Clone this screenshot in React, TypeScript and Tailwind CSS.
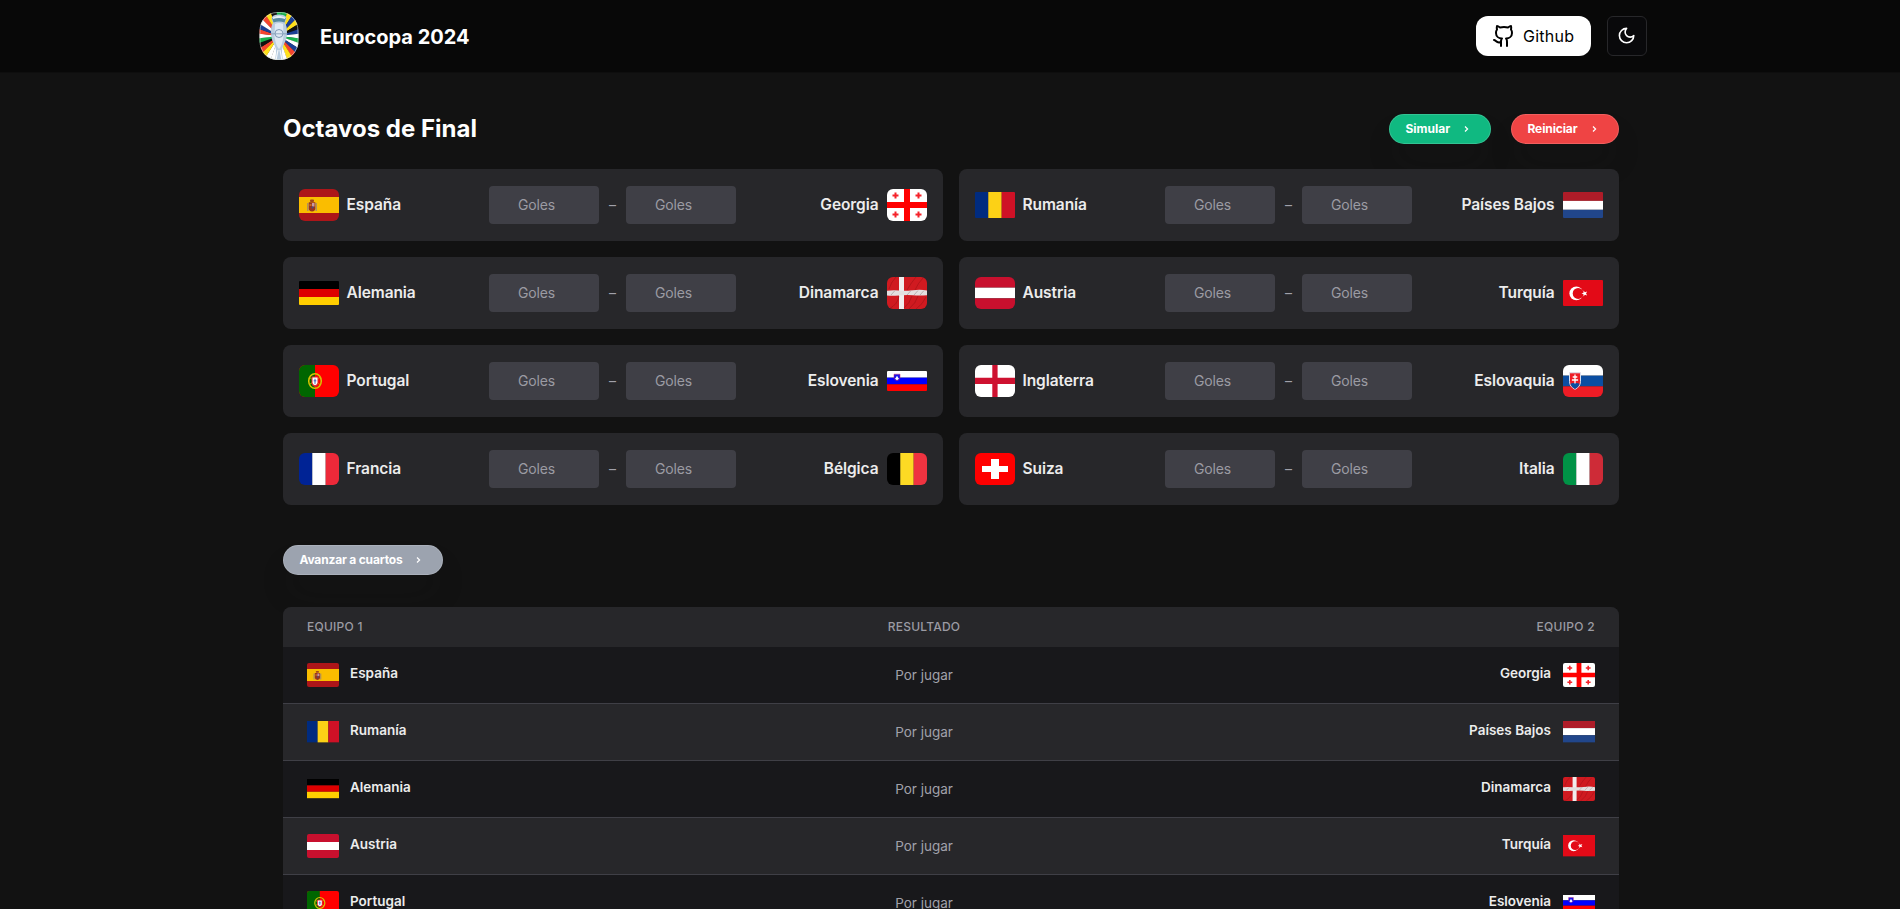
import type { ReactNode } from "react";

type Team = { name: string; h: number; art: ReactNode };

/* Flag artwork is drawn on a 40 x h canvas and stretched to its box. */
const vertical = (a: string, b: string, c: string, h: number) => (
  <>
    <rect width="13.4" height={h} fill={a} />
    <rect x="13.3" width="13.4" height={h} fill={b} />
    <rect x="26.7" width="13.3" height={h} fill={c} />
  </>
);
const horizontal = (a: string, b: string, c: string, h: number) => (
  <>
    <rect width="40" height={h / 3} fill={a} />
    <rect y={h / 3} width="40" height={h / 3} fill={b} />
    <rect y={(h * 2) / 3} width="40" height={h / 3} fill={c} />
  </>
);

const T: Record<string, Team> = {
  es: {
    name: "España",
    h: 32,
    art: (
      <>
        <rect width="40" height="32" fill="#ad1519" />
        <rect y="8" width="40" height="16" fill="#fabd00" />
        <path d="M8.8 14v8M17.2 14v8" stroke="#a58a6a" strokeWidth="1.3" />
        <rect x="11" y="10.5" width="4" height="2.5" rx="1" fill="#a3471b" />
        <path d="M9.800 13.200h6.500v6.300q0 2.500-3.250 3-3.250-.5-3.250-3z" fill="#98331f" />
        <rect x="13" y="14" width="2.500" height="3.500" fill="#c79aa4" />
        <rect x="10.500" y="15" width="2" height="2" fill="#c96a1e" />
        <circle cx="13.500" cy="18.500" r="1" fill="#3c4f8a" />
      </>
    ),
  },
  ge: {
    name: "Georgia",
    h: 32,
    art: (
      <>
        <rect width="40" height="32" fill="#fff" />
        <path d="M17 0h6v32h-6zM0 13h40v6H0z" fill="#f00" />
        <path d="M8.500 3.500v6M5.500 6.500h6M31.500 3.500v6M28.500 6.500h6M8.500 22.500v6M5.500 25.500h6M31.500 22.500v6M28.500 25.500h6" stroke="#f5222a" strokeWidth="2" />
      </>
    ),
  },
  ro: { name: "Rumanía", h: 26.7, art: vertical("#002b7f", "#fcd116", "#ce1126", 26.7) },
  nl: { name: "Países Bajos", h: 26.7, art: horizontal("#ae1c28", "#fff", "#21468b", 26.7) },
  de: { name: "Alemania", h: 24, art: horizontal("#000", "#d00", "#ffce00", 24) },
  dk: {
    name: "Dinamarca",
    h: 32,
    art: (
      <>
        <rect width="40" height="32" fill="#d01a20" />
        <path d="M12 0h5v32h-5z" fill="#f1eded" />
        <path d="M0 13.800q6-.8 12-.2t14-.4 14 .4v4.600q-8 .6-14 0t-14 .2-12 0z" fill="#e4dfdf" />
        <path d="M4 18l4-4.500M20 18l4-4.500M27 18l4-4.500M33 18l4-4.500" stroke="#b9b0b0" strokeWidth="1" />
        <path d="M2 32Q11 27 12 19M17 31q6-5 8-12M22 32q7-6 9-13M29 32q7-5 10-12M20 13q4-7 9-13M28 13q3-7 8-12M2 12Q4 5 9 0" stroke="#7d0d12" strokeWidth="1" strokeOpacity=".35" fill="none" />
      </>
    ),
  },
  at: { name: "Austria", h: 32, art: horizontal("#c8102e", "#fff", "#c8102e", 32) },
  tr: {
    name: "Turquía",
    h: 26.7,
    art: (
      <>
        <rect width="40" height="26.700" fill="#e30a17" />
        <circle cx="13.300" cy="13.400" r="6.900" fill="#fff" />
        <circle cx="15.200" cy="13.400" r="5.500" fill="#e30a17" />
        <path d="M18.500 13.400l2-.7v-2.200l1.400 1.700 2.300-.8-1.200 2 1.200 2-2.300-.6-1.400 1.700v-2.200z" fill="#fff" />
      </>
    ),
  },
  pt: {
    name: "Portugal",
    h: 32,
    art: (
      <>
        <rect width="40" height="32" fill="#f00" />
        <rect width="16" height="32" fill="#060" />
        <ellipse cx="16" cy="16" rx="6.300" ry="7.300" fill="none" stroke="#d8c400" strokeWidth="1.500" />
        <path d="M10.500 12.500l11 7.500M10.500 19.500l11-7.500" stroke="#c9b800" strokeWidth=".9" />
        <path d="M12.500 11.500h7v6q0 3.500-3.500 4.500-3.500-1-3.500-4.500z" fill="#e3262c" />
        <path d="M13.500 12.500h5v5q0 2-2.500 2.700-2.500-.7-2.500-2.700z" fill="#fff" />
        <path d="M16 13.800v5M14.700 15.800h2.600" stroke="#3c62b8" strokeWidth="1" />
      </>
    ),
  },
  si: {
    name: "Eslovenia",
    h: 20,
    art: (
      <>
        {horizontal("#fff", "#00f", "#f00", 20)}
        <path d="M7 3.200h6v3.600q0 2-3 3-3-1-3-3z" fill="#1414f0" stroke="#d02060" strokeWidth=".5" />
        <path d="M8 7.800l1-1.300 1-1.700 1 1.700 1 1.300-2 1.500z" fill="#fff" />
      </>
    ),
  },
  en: {
    name: "Inglaterra",
    h: 32,
    art: (
      <>
        <rect width="40" height="32" fill="#fff" />
        <path d="M17.300 0h5.300v32h-5.300zM0 12.800h40v6.300H0z" fill="#ce1130" />
      </>
    ),
  },
  sk: {
    name: "Eslovaquia",
    h: 32,
    art: (
      <>
        {horizontal("#fff", "#0b4ea2", "#ee1c25", 32)}
        <path d="M6.500 7.800h11v8.500q0 5.500-5.500 8-5.500-2.500-5.500-8z" fill="#ee1c25" stroke="#d9dfee" strokeWidth="1" />
        <path d="M7.400 19q2-1.500 4.600-.8 2.600-.7 4.600.8-1.300 3.300-4.600 4.900Q8.700 22.300 7.400 19z" fill="#0b4ea2" />
        <path d="M12 9.500v9M9.700 12h4.600M8.900 15h6.200" stroke="#fff" strokeWidth="1.300" />
      </>
    ),
  },
  fr: { name: "Francia", h: 32, art: vertical("#002395", "#fff", "#ed2939", 32) },
  be: { name: "Bélgica", h: 32, art: vertical("#000", "#fdda24", "#ef3340", 32) },
  ch: {
    name: "Suiza",
    h: 32,
    art: (
      <>
        <rect width="40" height="32" fill="#f00" />
        <path d="M16 6h8v20h-8zM7 13h26v6H7z" fill="#fff" />
      </>
    ),
  },
  it: { name: "Italia", h: 32, art: vertical("#009246", "#fff", "#ce2b37", 32) },
};

const matches: [Team, Team][] = [
  [T.es, T.ge],
  [T.ro, T.nl],
  [T.de, T.dk],
  [T.at, T.tr],
  [T.pt, T.si],
  [T.en, T.sk],
  [T.fr, T.be],
  [T.ch, T.it],
];

function Flag({ team, small }: { team: Team; small?: boolean }) {
  const full = team.h === 32;
  const width = small ? 32 : 40;
  const height = small ? (full ? 24 : team.h * 0.8) : team.h;
  const radius = full ? (small ? "rounded-[2px]" : "rounded-md") : small ? "" : "rounded-[1px]";
  return (
    <span className={small ? "flex h-6 w-8 shrink-0 items-center" : "flex h-8 w-10 shrink-0 items-center"}>
      <svg className={radius} width={width} height={height} viewBox={`0 0 40 ${team.h}`} preserveAspectRatio="none">
        {team.art}
      </svg>
    </span>
  );
}

/* Ray colours of the badge, clockwise from the top. */
const rays = [
  "#16b04b", "#16b04b", "#ffe01a", "#1b3f94", "#ffe01a", "#111111", "#1b3f94", "#ffffff", "#16b04b",
  "#ffffff", "#1b3f94", "#f4442e", "#ffe01a", "#ffffff", "#16b04b", "#ffffff", "#ffffff", "#ffe01a", "#f4442e",
  "#111111", "#16b04b", "#ffffff", "#f4442e", "#1b3f94", "#ffffff", "#f4442e", "#ffe01a", "#111111",
];

function Logo() {
  const step = (Math.PI * 2) / rays.length;
  return (
    <svg width="52" height="50" viewBox="0 0 52 50">
      <clipPath id="badge">
        <rect x="6.500" y="1" width="39" height="48" rx="17.500" ry="19" />
      </clipPath>
      <g clipPath="url(#badge)">
        {rays.map((c, i) => {
          const a = (i - 0.5) * step;
          const b = a + step + 0.01;
          return (
            <path
              key={i}
              fill={c}
              d={`M26 25L${26 + 40 * Math.sin(a)} ${25 - 40 * Math.cos(a)}L${26 + 40 * Math.sin(b)} ${25 - 40 * Math.cos(b)}z`}
            />
          );
        })}
        <path d="M18.500 7.500Q19 3.500 26 3.500t7.500 4L32 12q2 3 2 9 0 7-3 12-2.500 5-2 9l1 7h-8l1-7q.5-4-2-9-3-5-3-12 0-6 2-9z" fill="#b9cde0" />
        <path d="M19 7q7-4 14 0l-1.500 4.500q-5.500-2.200-11 0z" fill="#55899f" />
        <path d="M19.500 6.500q6.500-3.500 13 0l-.5 1.500q-6-2-12 0z" fill="#e6eef4" />
        <path d="M22 13q4-2 8 0l.5 12q-1 9-4.500 13-3.500-4-4.500-13z" fill="#dfe9f4" />
        <circle cx="26" cy="22.500" r="4" fill="none" stroke="#7f9ab6" strokeWidth="1" />
        <path d="M17.500 22.800h17" stroke="#7f9ab6" strokeWidth=".8" />
        <path d="M25 39l-2 10M27 39l2 10" stroke="#f5f8fb" strokeWidth="1.200" />
      </g>
      <rect x="7" y="1.500" width="38" height="47" rx="17" ry="18.500" fill="none" stroke="#d8dcd8" strokeWidth=".8" strokeOpacity=".7" />
    </svg>
  );
}

function Pill({ label, look }: { label: string; look: string }) {
  return (
    <button
      className={`flex h-[30px] items-center justify-between rounded-full border border-white/15 pl-[15.500px] pr-[21px] text-[12px] font-bold text-white shadow-[0_20px_30px_-7px_rgba(27,27,27,0.27)] ${look}`}
    >
      <span>{label}</span>
      <svg width="5" height="8" viewBox="0 0 5 8" fill="none" stroke="currentColor" strokeWidth="1.200">
        <path d="M1 1.500L3.600 4 1 6.500" />
      </svg>
    </button>
  );
}

function Goals() {
  return (
    <input
      placeholder="Goles"
      className="h-[38px] w-[110px] rounded bg-[#3f3f46] pb-0.5 pl-[29px] pr-7 text-[14px] tracking-[-0.01em] text-white placeholder:text-[#9b9ba3]"
    />
  );
}

function MatchCard({ home, away }: { home: Team; away: Team }) {
  return (
    <div className="flex h-[72px] items-center rounded-lg bg-[#27272a] px-4">
      <div className="flex w-[190px] items-center gap-[7.500px]">
        <Flag team={home} />
        <span className="text-[15.500px] font-semibold tracking-[-0.005em] text-[#ececec]">{home.name}</span>
      </div>
      <div className="flex items-center">
        <Goals />
        <span className="flex w-[27px] justify-center pb-0.5 text-[14px] text-[#a1a1aa]">–</span>
        <Goals />
      </div>
      <div className="flex flex-1 items-center justify-end gap-[8.500px]">
        <span className="text-[15.500px] font-semibold tracking-[-0.005em] text-[#ececec]">{away.name}</span>
        <Flag team={away} />
      </div>
    </div>
  );
}

export default function App() {
  return (
    <div className="h-screen overflow-hidden bg-[#121212] font-['Inter',sans-serif] text-white">
      <header className="h-[73px] border-b border-[#0e0e0e] bg-[#080808]">
        <div className="mx-auto flex h-[72px] w-[1394px] items-center justify-between">
          <div className="flex items-center gap-[15px]">
            <Logo />
            <h1 className="pt-px text-[20px] font-bold">Eurocopa 2024</h1>
          </div>
          <div className="flex items-center gap-4">
            <a className="flex h-10 w-[115px] items-center rounded-xl bg-white pl-4 text-black">
              <svg width="24" height="24" viewBox="0 0 24 24" fill="none" stroke="currentColor" strokeWidth="2" strokeLinecap="round" strokeLinejoin="round">
                <path d="M15 22v-4a4.800 4.800 0 0 0-1-3.500c3 0 6-2 6-5.500.08-1.250-.27-2.480-1-3.500.28-1.150.28-2.350 0-3.500 0 0-1 0-3 1.500-2.640-.5-5.360-.5-8 0C6 2 5 2 5 2c-.3 1.150-.3 2.350 0 3.500A5.403 5.403 0 0 0 4 9c0 3.500 3 5.500 6 5.500-.39.49-.68 1.050-.85 1.650-.17.6-.22 1.230-.15 1.850v4" />
                <path d="M9 18c-4.510 2-5-2-7-2" />
              </svg>
              <span className="ml-[7px] text-[16px] tracking-[0.015em]">Github</span>
            </a>
            <button className="flex size-10 items-center justify-center rounded-md border border-[#27272a] bg-[#09090b]">
              <svg width="19.200" height="19.200" viewBox="0 0 24 24" fill="none" stroke="currentColor" strokeWidth="2" strokeLinecap="round" strokeLinejoin="round">
                <path d="M12 3a6 6 0 0 0 9 9 9 9 0 1 1-9-9Z" />
              </svg>
            </button>
          </div>
        </div>
      </header>

      <main className="mx-auto w-[1338px] pl-0.5">
        <div className="flex items-center justify-between pt-[38px]">
          <h2 className="text-[24px] leading-9 font-bold">Octavos de Final</h2>
          <div className="flex gap-5">
            <Pill label="Simular" look="w-[102px] bg-[#10b981]" />
            <Pill label="Reiniciar" look="w-[108px] bg-[#ef4444] tracking-[-0.01em]" />
          </div>
        </div>

        <section className="mt-[22px] grid grid-cols-2 gap-4">
          {matches.map(([home, away]) => (
            <MatchCard key={home.name} home={home} away={away} />
          ))}
        </section>

        <div className="mt-10">
          <Pill label="Avanzar a cuartos" look="w-[160px] bg-[#9ca3af] tracking-[-0.015em]" />
        </div>

        <section className="mt-8 overflow-hidden rounded-t-lg bg-[#18181b]">
          <div className="grid h-10 grid-cols-[528px_202px_1fr] items-center bg-[#27272a] pl-6 pr-6 text-[12px] font-medium tracking-[0.02em] text-[#9b9ba3]">
            <span>EQUIPO 1</span>
            <span className="-ml-6 text-center">RESULTADO</span>
            <span className="text-right tracking-[0.025em]">EQUIPO 2</span>
          </div>
          {matches.map(([home, away]) => (
            <div
              key={home.name}
              className="grid h-[57px] grid-cols-[528px_202px_1fr] items-center border-b border-[#3f3f46] px-6 odd:bg-[#27272a]"
            >
              <div className="flex items-center gap-[11px]">
                <Flag team={home} small />
                <span className="pb-[3px] text-[13.500px] font-semibold text-[#ececec]">{home.name}</span>
              </div>
              <span className="-ml-6 text-center text-[13.500px] text-[#a1a1aa]">Por jugar</span>
              <div className="flex items-center justify-end gap-[12px]">
                <span className="pb-[3px] text-[13.500px] font-semibold text-[#ececec]">{away.name}</span>
                <Flag team={away} small />
              </div>
            </div>
          ))}
        </section>
      </main>
    </div>
  );
}
